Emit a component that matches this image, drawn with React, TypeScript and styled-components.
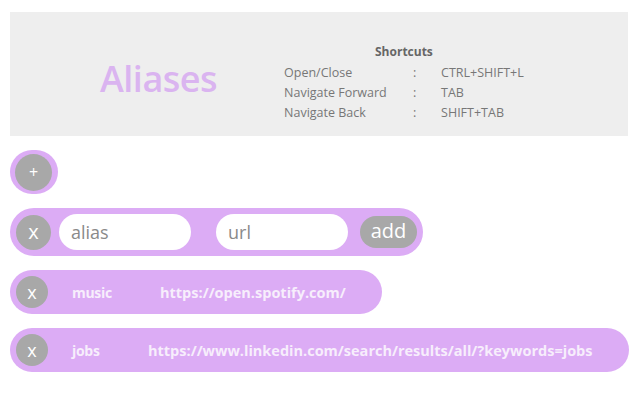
import React from "react";
import styled, { createGlobalStyle } from "styled-components";

const Global = createGlobalStyle`
  html, body { margin: 0; padding: 0; background: #ffffff; }
  body { font-family: "Open Sans", "Noto Sans", sans-serif; }
`;

const Page = styled.div`
  padding: 12px 12px 0 10px;
  display: flex;
  flex-direction: column;
  align-items: flex-start;
  gap: 14px;
`;

const Header = styled.header`
  align-self: stretch;
  height: 124px;
  background: #eeeeee;
  display: flex;
  align-items: center;
  padding-left: 90px;
  gap: 67px;
  box-sizing: border-box;
`;

const Title = styled.h1`
  margin: 0;
  font-size: 36px;
  font-weight: 600;
  color: #dab4f0;
  letter-spacing: -0.5px;
  position: relative;
  top: 4px;
`;

const Shortcuts = styled.div`
  display: flex;
  flex-direction: column;
  align-items: center;
  margin-top: 17px;
`;

const ShortcutsTitle = styled.div`
  font-size: 12px;
  font-weight: 700;
  color: #666666;
  line-height: 20px;
  margin-bottom: 1px;
`;

const Table = styled.div`
  display: grid;
  grid-template-columns: 129px 28px auto;
  font-size: 12.5px;
  line-height: 20px;
  color: #777777;
`;

const Cell = styled.span``;

const Circle = styled.button<{ $size: number; $font: number }>`
  width: ${(p) => p.$size}px;
  height: ${(p) => p.$size}px;
  border-radius: 50%;
  border: none;
  padding: 0;
  background: #a8a8a8;
  color: #ffffff;
  font-family: "Open Sans", sans-serif;
  font-size: ${(p) => p.$font}px;
  line-height: 1;
  display: flex;
  align-items: center;
  justify-content: center;
  flex-shrink: 0;
`;

const PlusWrap = styled.div`
  width: 48px;
  height: 44px;
  border-radius: 24px;
  background: #dcacf5;
  display: flex;
  align-items: center;
  padding-left: 5px;
  box-sizing: border-box;
`;

const Pill = styled.div<{ $height: number }>`
  height: ${(p) => p.$height}px;
  border-radius: ${(p) => p.$height / 2}px;
  background: #dcacf5;
  display: flex;
  align-items: center;
  padding: 0 6px 0 6px;
  box-sizing: border-box;
`;

const Input = styled.div<{ $ml: number }>`
  width: 132px;
  height: 36px;
  border-radius: 18px;
  background: #ffffff;
  margin-left: ${(p) => p.$ml}px;
  display: flex;
  align-items: center;
  padding-left: 12px;
  box-sizing: border-box;
  font-size: 18px;
  color: #8a8a8a;
`;

const AddButton = styled.button`
  margin-left: 12px;
  width: 57px;
  height: 32px;
  border-radius: 16px;
  border: none;
  background: #a8a8a8;
  color: #ffffff;
  font-family: "Open Sans", sans-serif;
  font-size: 20px;
  padding: 0 0 2px;
  line-height: 1;
`;

const AliasUrl = styled.span`
  font-size: 14.5px;
  font-weight: 700;
  color: #f7eefc;
  padding-right: 30px;
  white-space: nowrap;
`;

const NameCell = styled.span<{ $w: number }>`
  margin-left: 24px;
  width: ${(p) => p.$w}px;
  flex-shrink: 0;
  font-size: 14px;
  font-weight: 700;
  color: #f7eefc;
  letter-spacing: -0.3px;
`;

const shortcuts = [
  ["Open/Close", ":", "CTRL+SHIFT+L"],
  ["Navigate Forward", ":", "TAB"],
  ["Navigate Back", ":", "SHIFT+TAB"],
];

const aliases = [
  { name: "music", url: "https://open.spotify.com/", w: 88 },
  { name: "jobs", url: "https://www.linkedin.com/search/results/all/?keywords=jobs", w: 76 },
];

export default function App() {
  return (
    <>
      <Global />
      <Page>
        <Header>
          <Title>Aliases</Title>
          <Shortcuts>
            <ShortcutsTitle>Shortcuts</ShortcutsTitle>
            <Table>
              {shortcuts.map((row) =>
                row.map((c, i) => <Cell key={row[0] + i}>{c}</Cell>)
              )}
            </Table>
          </Shortcuts>
        </Header>
        <PlusWrap>
          <Circle $size={37} $font={16}>+</Circle>
        </PlusWrap>
        <Pill $height={48}>
          <Circle $size={35} $font={20}>x</Circle>
          <Input $ml={8}>alias</Input>
          <Input $ml={25}>url</Input>
          <AddButton>add</AddButton>
        </Pill>
        {aliases.map((a) => (
          <Pill key={a.name} $height={44}>
            <Circle $size={32} $font={18}>x</Circle>
            <NameCell $w={a.w}>{a.name}</NameCell>
            <AliasUrl>{a.url}</AliasUrl>
          </Pill>
        ))}
      </Page>
    </>
  );
}
